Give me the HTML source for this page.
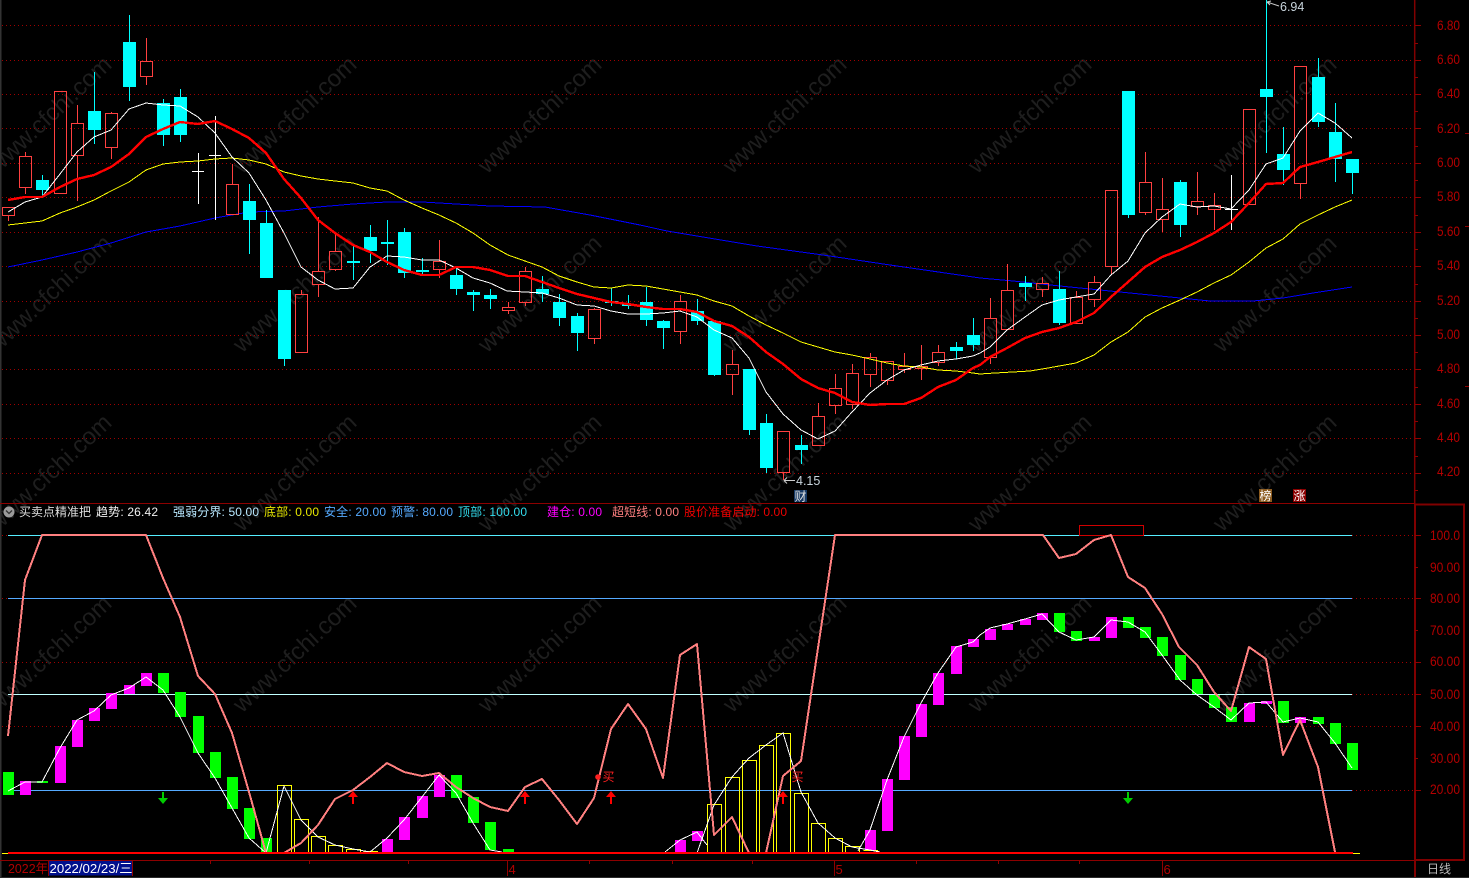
<!DOCTYPE html>
<html><head><meta charset="utf-8"><title>K线图</title>
<style>
html,body{margin:0;padding:0;background:#000;width:1469px;height:878px;overflow:hidden}
svg{display:block}
text{font-family:"Liberation Sans","Noto Sans CJK SC",sans-serif;font-size:12px}
polyline{shape-rendering:crispEdges}
.ax text{fill:#b40000;font-size:14px}
.wm text{fill:#1e1e1e;font-size:24px;text-anchor:middle;dominant-baseline:central}
</style></head><body>
<svg xmlns="http://www.w3.org/2000/svg" width="1469" height="878" viewBox="0 0 1469 878">
<rect width="1469" height="878" fill="#000"/>
<g class="wm">
<text transform="translate(50 115) rotate(-43)">www.cfchi.com</text><text transform="translate(295 115) rotate(-43)">www.cfchi.com</text><text transform="translate(540 115) rotate(-43)">www.cfchi.com</text><text transform="translate(785 115) rotate(-43)">www.cfchi.com</text><text transform="translate(1030 115) rotate(-43)">www.cfchi.com</text><text transform="translate(1275 115) rotate(-43)">www.cfchi.com</text>
<text transform="translate(50 294) rotate(-43)">www.cfchi.com</text><text transform="translate(295 294) rotate(-43)">www.cfchi.com</text><text transform="translate(540 294) rotate(-43)">www.cfchi.com</text><text transform="translate(785 294) rotate(-43)">www.cfchi.com</text><text transform="translate(1030 294) rotate(-43)">www.cfchi.com</text><text transform="translate(1275 294) rotate(-43)">www.cfchi.com</text>
<text transform="translate(50 473) rotate(-43)">www.cfchi.com</text><text transform="translate(295 473) rotate(-43)">www.cfchi.com</text><text transform="translate(540 473) rotate(-43)">www.cfchi.com</text><text transform="translate(785 473) rotate(-43)">www.cfchi.com</text><text transform="translate(1030 473) rotate(-43)">www.cfchi.com</text><text transform="translate(1275 473) rotate(-43)">www.cfchi.com</text>
<text transform="translate(50 654) rotate(-43)">www.cfchi.com</text><text transform="translate(295 654) rotate(-43)">www.cfchi.com</text><text transform="translate(540 654) rotate(-43)">www.cfchi.com</text><text transform="translate(785 654) rotate(-43)">www.cfchi.com</text><text transform="translate(1030 654) rotate(-43)">www.cfchi.com</text><text transform="translate(1275 654) rotate(-43)">www.cfchi.com</text>
</g>
<!-- frame -->
<rect x="0" y="0" width="1.5" height="878" fill="#333"/>
<!-- dotted grid main -->
<path fill="none" stroke="#a00000" stroke-dasharray="1 3" d="M2 25.5H1414M2 60.5H1414M2 94.5H1414M2 128.5H1414M2 163.5H1414M2 197.5H1414M2 232.5H1414M2 266.5H1414M2 301.5H1414M2 335.5H1414M2 369.5H1414M2 404.5H1414M2 438.5H1414M2 473.5H1414"/>
<!-- blue MA -->
<polyline fill="none" stroke="#0000ff" stroke-width="1" points="8,267 42,260 77,252 111,243 146,232 180,226 215,218 249,212 284,211 318,207 353,204 387,202 422,202 456,204 490,206 545,207 590,215 640,225 667,231 757,246 823,255 890,265 980,278 1013,281 1060,286 1100,290 1140,294 1180,298 1210,301 1253,301 1283,298 1313,293 1352,287"/>
<!-- red candles -->
<path fill="none" stroke="#ff4040" d="M2.5 207.5h12v8h-12zM8.5 216V221
M19.5 156.5h12V187.5h-12zM25.5 152V156M25.5 188V194
M54.5 91.5h12V193.5h-12z
M71.5 123.5h12V155.5h-12zM77.5 105V123M77.5 156V201
M105.5 113.5h12V147.5h-12zM111.5 112V113M111.5 148V159
M140.5 61.5h12V76.5h-12zM146.5 38V61M146.5 77V85
M226.5 184.5h12V214.5h-12zM232.5 164V184
M312.5 271.5h12V284.5h-12zM318.5 217V271M318.5 285V297
M329.5 251.5h12V269.5h-12zM335.5 234V251M335.5 270V271
M433.5 261.5h12V269.5h-12zM439.5 240V261M439.5 270V278
M502.5 307.5h12V310.5h-12zM508.5 302V307M508.5 311V314
M519.5 271.5h12V302.5h-12zM525.5 267V271M525.5 303V306
M295.5 294.5h12V352.5h-12zM301.5 290V294
M588.5 309.5h12V338.5h-12zM594.5 308V309M594.5 339V344
M674.5 301.5h12V331.5h-12zM680.5 295V301M680.5 332V344
M726.5 364.5h12V374.5h-12zM732.5 350V364M732.5 375V395
M777.5 431.5h12V472.5h-12zM783.5 473V480
M812.5 416.5h12V445.5h-12zM818.5 403V416
M829.5 388.5h12V405.5h-12zM835.5 374V388M835.5 406V414
M846.5 373.5h12V404.5h-12zM852.5 364V373M852.5 405V409
M864.5 357.5h12V374.5h-12zM870.5 353V357M870.5 375V387
M881.5 361.5h12V380.5h-12zM887.5 381V385
M898.5 366.5h12V369.5h-12zM904.5 353V366M904.5 370V373
M915.5 366.5h12V368.5h-12zM921.5 345V366M921.5 369V380
M932.5 352.5h12V362.5h-12zM938.5 345V352M938.5 363V366
M984.5 318.5h12V357.5h-12zM990.5 298V318M990.5 358V364
M1001.5 290.5h12V329.5h-12zM1007.5 264V290
M1036.5 283.5h12V289.5h-12zM1042.5 277V283M1042.5 290V297
M1070.5 297.5h12V323.5h-12zM1076.5 291V297
M1088.5 282.5h12V299.5h-12zM1094.5 276V282M1094.5 300V307
M1105.5 190.5h12V266.5h-12zM1111.5 267V275
M1139.5 182.5h12V212.5h-12zM1145.5 152V182M1145.5 213V215
M1156.5 209.5h12V219.5h-12zM1162.5 178V209M1162.5 220V232
M1191.5 201.5h12V206.5h-12zM1197.5 172V201M1197.5 207V215
M1208.5 205.5h12V209.5h-12zM1214.5 193V205M1214.5 210V230
M1243.5 109.5h12V204.5h-12z
M1294.5 66.5h12V183.5h-12zM1300.5 184V199"/>
<!-- cyan wicks -->
<path fill="none" stroke="#00ffff" d="M42.5 175V196M94.5 72V144M129.5 15V101M163.5 99V146M180.5 89V142M249.5 184V254M266.5 210V278M284.5 290V366M353.5 246V280M370.5 225V263M387.5 220V265M404.5 228V278M422.5 258V274M456.5 269V295M473.5 290V311M490.5 289V309M542.5 276V302M559.5 294V326M577.5 313V351M611.5 288V306M628.5 295V309M646.5 287V326M663.5 320V349M697.5 299V325M714.5 321V376M749.5 369V435M766.5 414V473M801.5 435V464M956.5 342V359M973.5 318V351M1025.5 276V301M1059.5 271V325M1128.5 91V218M1180.5 180V237M1266.5 0V153M1283.5 127V185M1318.5 58V127M1335.5 103V182M1352.5 159V194"/>
<!-- cyan bodies -->
<path fill="#00ffff" d="M36 180h13V190h-13zM88 111h13V130h-13zM123 42h13V87h-13zM157 103h13V135h-13zM174 97h13V135h-13zM243 201h13V220h-13zM260 223h13V278h-13zM278 290h13V359h-13zM347 261h13V263h-13zM364 237h13V251h-13zM381 242h13V244h-13zM398 232h13V273h-13zM416 270h13V272h-13zM450 275h13V289h-13zM467 292h13V295h-13zM484 295h13V299h-13zM536 289h13V294h-13zM553 302h13V318h-13zM571 316h13V333h-13zM605 301h13V303h-13zM622 304h13V306h-13zM640 302h13V320h-13zM657 321h13V328h-13zM691 311h13V321h-13zM708 321h13V375h-13zM743 369h13V430h-13zM760 423h13V468h-13zM795 445h13V450h-13zM950 347h13V351h-13zM967 335h13V345h-13zM1019 283h13V287h-13zM1053 289h13V323h-13zM1122 91h13V215h-13zM1174 182h13V225h-13zM1260 89h13V97h-13zM1277 154h13V170h-13zM1312 77h13V122h-13zM1329 132h13V159h-13zM1346 159h13V173h-13z"/>
<!-- white doji -->
<path fill="none" stroke="#fff" d="M198.5 153V204M192 171.5h12M215.5 116V220M209 155.5h12M1231.5 175V230M1225 209.5h13"/>
<!-- yellow MA -->
<polyline fill="none" stroke="#ffff00" stroke-width="1" points="8,225 25,223 42,221 60,213 77,207 94,200 111,191 129,182 146,170 163,164 180,162 198,161 215,159 232,158 249,160 266,164 284,172 301,176 318,179 335,181 353,183 370,188 387,191 404,200 422,208 439,215 456,223 473,233 490,245 508,255 525,261 542,267 559,276 577,282 594,287 611,288 628,285 646,286 663,289 680,292 697,295 714,301 732,306 749,316 766,325 783,333 801,342 818,347 835,352 852,355 870,359 887,363 904,366 921,367 938,370 956,371 973,373 980,374 995,373 1030,371 1048,368 1076,363 1094,355 1111,342 1128,332 1145,317 1162,308 1180,300 1197,292 1214,283 1231,275 1249,262 1266,248 1283,239 1300,224 1318,215 1335,207 1352,200"/>
<!-- white MA -->
<polyline fill="none" stroke="#fff" stroke-width="1" points="8,212 25,202 42,197 60,174 77,152 94,137 111,130 129,109 146,103 163,105 180,106 198,117 215,133 232,157 249,173 266,200 284,233 301,267 318,280 335,289 353,288 370,267 387,256 404,257 422,260 439,260 456,268 473,278 490,283 507,291 525,292 542,293 559,298 577,305 594,306 611,311 628,314 646,314 663,313 680,311 697,317 714,330 732,338 749,358 766,392 783,414 801,430 818,439 835,431 852,412 870,393 887,380 904,370 921,365 938,361 956,359 973,356 980,353 990,347 1007,330 1025,317 1042,305 1059,300 1076,297 1094,294 1111,275 1128,261 1145,233 1162,217 1180,204 1197,207 1214,206 1231,209 1249,190 1266,164 1283,158 1300,131 1318,113 1335,123 1352,138"/>
<!-- red MA -->
<polyline fill="none" stroke="#ff0000" stroke-width="2.4" stroke-linejoin="round" points="8,200 25,197 42,197 60,187 77,179 94,175 111,167 129,154 146,137 163,129 180,122 198,124 215,121 232,129 249,138 266,153 284,179 301,198 318,220 335,233 353,245 370,252 387,262 404,270 422,275 439,275 456,267 473,267 490,270 508,276 525,276 542,282 559,288 577,294 594,298 611,302 628,304 646,307 663,309 680,309 697,312 714,321 732,326 749,337 766,352 783,364 801,379 818,388 835,393 852,402 870,405 887,404 904,404 921,398 938,387 956,380 973,368 980,365 990,357 1007,348 1025,338 1042,332 1059,328 1076,322 1094,313 1111,297 1128,282 1145,267 1162,257 1180,250 1197,242 1214,233 1231,222 1249,203 1266,184 1283,183 1300,167 1318,162 1335,157 1352,152"/>
<!-- hi/lo labels -->
<path fill="none" stroke="#ccc" d="M1267 2L1279 6M1267 2l4-1M1267 2l3 3M784 480.5H795M784 480.5l3-3M784 480.5l3 3"/>
<text x="1280" y="11" fill="#c8d4dc" style="font-size:12.5px">6.94</text>
<text x="796" y="485" fill="#c8d4dc" style="font-size:12.5px">4.15</text>
<rect x="794" y="490" width="13" height="12" fill="#173a66"/><text x="794.5" y="500.5" fill="#e0e0e0">财</text>
<rect x="1259" y="489" width="13" height="13" fill="#8b5a1e"/><text x="1259.5" y="500" fill="#fff">榜</text>
<rect x="1293" y="489" width="13" height="13" fill="#8b0000"/><text x="1293.5" y="500" fill="#fff">涨</text>

<!-- separators -->
<path stroke="#8c0000" fill="none" d="M0 503.5H1415M0 860.5H1415"/>
<path stroke="#800000" fill="none" stroke-width="1.5" d="M1414.7 0V504"/>
<path stroke="#800000" fill="none" stroke-width="2" d="M1415 504.5H1464V860H1415zM1415 860V878"/>

<!-- header -->
<circle cx="9" cy="512" r="5.5" fill="#9a9a9a"/><path d="M6 510.5l3 3 3-3" stroke="#333" fill="none" stroke-width="1.3"/>
<text x="19" y="516" fill="#dcdcdc">买卖点精准把</text>
<text x="96" y="516" fill="#f0f0f0" textLength="62">趋势: 26.42</text>
<text x="173" y="516" fill="#b8e8ff" textLength="86">强弱分界: 50.00</text>
<text x="264" y="516" fill="#e8e800" textLength="55">底部: 0.00</text>
<text x="324" y="516" fill="#55aaff" textLength="62">安全: 20.00</text>
<text x="391" y="516" fill="#55aaff" textLength="62">预警: 80.00</text>
<text x="458" y="516" fill="#33ddee" textLength="69">顶部: 100.00</text>
<text x="547" y="516" fill="#ff00ff" textLength="55">建仓: 0.00</text>
<text x="612" y="516" fill="#ff8080" textLength="67">超短线: 0.00</text>
<text x="684" y="516" fill="#ee0000" textLength="103">股价准备启动: 0.00</text>

<!-- sub chart grid -->
<path fill="none" stroke="#a00000" stroke-dasharray="1 3" d="M2 662.5H1414M2 726.5H1414M1352 535.5H1414M1352 598.5H1414M1352 694.5H1414M1352 790.5H1414M2 535.5H8M2 598.5H8"/>
<path fill="none" stroke="#55eeff" d="M8 535.5H1352"/>
<path fill="none" stroke="#55aaff" d="M8 598.5H1352M8 790.5H1352"/>
<path fill="none" stroke="#c0ffff" d="M8 694.5H1352"/>
<rect x="1079.5" y="525.5" width="64" height="10" fill="none" stroke="#d00000"/>

<!-- green bars -->
<path fill="#00ff00" d="M3 772h11V795h-11zM37 781h11V783h-11zM158 673h11V693h-11zM175 692h11V717h-11zM193 716h11V753h-11zM210 752h11V778h-11zM227 777h11V809h-11zM244 808h11V839h-11zM261 838h11V852h-11zM451 775h11V798h-11zM468 797h11V823h-11zM485 822h11V850h-11zM503 849h11V852h-11zM1054 613h11V632h-11zM1071 631h11V641h-11zM1123 617h11V628h-11zM1140 627h11V638h-11zM1157 637h11V656h-11zM1175 655h11V680h-11zM1192 679h11V694h-11zM1209 695h11V708h-11zM1226 707h11V722h-11zM1278 701h11V723h-11zM1313 717h11V724h-11zM1330 723h11V744h-11zM1347 743h11V770h-11z"/>
<!-- magenta bars -->
<path fill="#ff00ff" d="M20 781h11V795h-11zM55 746h11V783h-11zM72 720h11V747h-11zM89 708h11V721h-11zM106 693h11V709h-11zM124 685h11V694h-11zM141 673h11V686h-11zM382 839h11V852h-11zM399 817h11V840h-11zM417 796h11V818h-11zM434 775h11V797h-11zM675 840h11V852h-11zM692 831h11V841h-11zM865 830h11V850h-11zM882 779h11V831h-11zM899 736h11V780h-11zM916 704h11V737h-11zM933 673h11V705h-11zM951 646h11V674h-11zM968 639h11V647h-11zM985 629h11V640h-11zM1002 624h11V630h-11zM1020 619h11V625h-11zM1037 613h11V620h-11zM1089 637h11V641h-11zM1106 617h11V638h-11zM1244 703h11V722h-11zM1261 701h11V704h-11zM1295 717h11V723h-11z"/>
<!-- yellow outline bars -->
<path fill="none" stroke="#ffff00" d="M277.5 853V785.5H291.5V853M294.5 853V819.5H308.5V853M311.5 853V836.5H325.5V853M328.5 853V845.5H342.5V853M346.5 853V849.5H360.5V853M363.5 851.5H378M707.5 853V804.5H721.5V853M725.5 853V777.5H739.5V853M742.5 853V760.5H756.5V853M759.5 853V745.5H773.5V853M776.5 853V733.5H790.5V853M794.5 853V793.5H808.5V853M811.5 853V823.5H825.5V853M828.5 853V838.5H842.5V853M845.5 853V846.5H859.5V853M863.5 850.5H878"/>
<!-- white trend -->
<g fill="none" stroke="#fff" stroke-width="1">
<polyline points="8,791 25,782 42,782 60,748 77,720 94,711 111,695 129,688 146,677 163,690 180,717 198,753 215,778 232,808 249,838 266,853 284,786 301,820 318,837 335,845 353,849 370,852 387,838 404,820 422,797 439,775 456,793 473,823 490,850 502,852"/>
<polyline points="665,852 680,840 697,832 707,845"/>
<polyline points="697,853 714,805 732,777 749,758 766,745 783,733 801,792 818,823 835,838 852,847 870,850 880,852"/>
<polyline points="858,851 870,830 887,780 904,737 921,703 938,673 956,647 973,642 980,635 990,628 1007,624 1025,619 1042,614 1059,632 1076,640 1094,637 1111,620 1128,622 1145,632 1162,655 1180,680 1197,695 1214,707 1231,720 1249,703 1266,702 1283,722 1300,718 1318,722 1335,743 1352,768"/>
</g>
<!-- pink line -->
<polyline fill="none" stroke="#ff8080" stroke-width="2" stroke-linejoin="round" points="8,736 25,580 42,535 146,535 163,578 180,617 198,676 215,694 232,733 249,792 266,853 284,853 301,843 318,825 335,799 353,790 370,777 387,763 404,772 422,776 439,773 456,787 473,798 490,807 508,811 525,787 542,779 559,800 577,824 594,798 611,729 628,704 646,729 663,778 680,655 697,644 714,835 732,817 749,853 766,853 783,776 801,761 835,535 1043,535 1059,558 1076,554 1094,540 1111,535 1128,577 1145,588 1162,614 1179,647 1197,665 1214,692 1231,711 1249,647 1266,659 1283,755 1300,720 1318,767 1335,852"/>
<!-- baseline -->
<path stroke="#ff0000" stroke-width="2" d="M8 853H1353"/>
<path stroke="#ffff00" d="M2 853.5H8M1353 853.5H1360"/>
<!-- arrows -->
<g fill="#00cc00"><path d="M162 792h2v6h4l-5 6-5-6h4z"/><path d="M1127 792h2v6h4l-5 6-5-6h4z"/></g>
<g fill="#ff0000"><path d="M352 804h2v-7h4l-5-6-5 6h4z"/><path d="M524 804h2v-7h4l-5-6-5 6h4z"/><path d="M610 804h2v-7h4l-5-6-5 6h4z"/><path d="M782 804h2v-7h4l-5-6-5 6h4z"/></g>
<circle cx="598" cy="777" r="2.8" fill="#ff2020"/>
<text x="602.5" y="781" fill="#ff2020">买</text>
<text x="791.5" y="781" fill="#ff2020">买</text>

<!-- axis -->
<path fill="none" stroke="#900000" d="M1415 25.5h6M1415 60.5h6M1415 94.5h6M1415 128.5h6M1415 163.5h6M1415 197.5h6M1415 232.5h6M1415 266.5h6M1415 301.5h6M1415 335.5h6M1415 369.5h6M1415 404.5h6M1415 438.5h6M1415 473.5h6M1415 43.5h3M1415 77.5h3M1415 111.5h3M1415 146.5h3M1415 180.5h3M1415 215.5h3M1415 249.5h3M1415 284.5h3M1415 318.5h3M1415 352.5h3M1415 387.5h3M1415 421.5h3M1415 456.5h3M1415 490.5h3M1415 535.5h6M1415 567.5h3M1415 598.5h6M1415 630.5h3M1415 662.5h6M1415 694.5h6M1415 726.5h6M1415 758.5h3M1415 790.5h6M1465 133.5h4M1465 226.5h4M1465 386.5h4"/>
<g class="ax">
<text x="1437" y="30" textLength="23" lengthAdjust="spacingAndGlyphs">6.80</text>
<text x="1437" y="64" textLength="23" lengthAdjust="spacingAndGlyphs">6.60</text>
<text x="1437" y="98" textLength="23" lengthAdjust="spacingAndGlyphs">6.40</text>
<text x="1437" y="133" textLength="23" lengthAdjust="spacingAndGlyphs">6.20</text>
<text x="1437" y="167" textLength="23" lengthAdjust="spacingAndGlyphs">6.00</text>
<text x="1437" y="201" textLength="23" lengthAdjust="spacingAndGlyphs">5.80</text>
<text x="1437" y="236" textLength="23" lengthAdjust="spacingAndGlyphs">5.60</text>
<text x="1437" y="270" textLength="23" lengthAdjust="spacingAndGlyphs">5.40</text>
<text x="1437" y="305" textLength="23" lengthAdjust="spacingAndGlyphs">5.20</text>
<text x="1437" y="339" textLength="23" lengthAdjust="spacingAndGlyphs">5.00</text>
<text x="1437" y="373" textLength="23" lengthAdjust="spacingAndGlyphs">4.80</text>
<text x="1437" y="408" textLength="23" lengthAdjust="spacingAndGlyphs">4.60</text>
<text x="1437" y="442" textLength="23" lengthAdjust="spacingAndGlyphs">4.40</text>
<text x="1437" y="476" textLength="23" lengthAdjust="spacingAndGlyphs">4.20</text>
<text x="1430" y="540" textLength="30" lengthAdjust="spacingAndGlyphs">100.0</text>
<text x="1430" y="572" textLength="30" lengthAdjust="spacingAndGlyphs">90.00</text>
<text x="1430" y="603" textLength="30" lengthAdjust="spacingAndGlyphs">80.00</text>
<text x="1430" y="635" textLength="30" lengthAdjust="spacingAndGlyphs">70.00</text>
<text x="1430" y="666" textLength="30" lengthAdjust="spacingAndGlyphs">60.00</text>
<text x="1430" y="699" textLength="30" lengthAdjust="spacingAndGlyphs">50.00</text>
<text x="1430" y="731" textLength="30" lengthAdjust="spacingAndGlyphs">40.00</text>
<text x="1430" y="763" textLength="30" lengthAdjust="spacingAndGlyphs">30.00</text>
<text x="1430" y="794" textLength="30" lengthAdjust="spacingAndGlyphs">20.00</text>
</g>

<!-- bottom bar -->
<path fill="none" stroke="#900000" d="M210.5 861V864M309.5 861V864M408.5 861V864M589.5 861V864M672.5 861V864M752.5 861V864M916.5 861V864M998.5 861V864M1079.5 861V864M507.5 861V876M834.5 861V876M1162.5 861V876"/>
<text x="8" y="873" fill="#b00000" style="font-size:13px" textLength="40" lengthAdjust="spacingAndGlyphs">2022年</text>
<rect x="49" y="861" width="84" height="14.5" fill="#00108c"/>
<path fill="none" stroke="#900000" d="M48.5 861V876M132.5 861V876"/>
<text x="49.5" y="873" fill="#fff" style="font-size:13px" textLength="83" lengthAdjust="spacingAndGlyphs">2022/02/23/三</text>
<text x="508.5" y="874" fill="#b00000" style="font-size:13px">4</text>
<text x="835.5" y="874" fill="#b00000" style="font-size:13px">5</text>
<text x="1163.5" y="874" fill="#b00000" style="font-size:13px">6</text>
<text x="1427" y="873" fill="#bbbbbb">日线</text>
<rect x="0" y="877" width="1469" height="1" fill="#2a2a2a"/>
</svg>
</body></html>
